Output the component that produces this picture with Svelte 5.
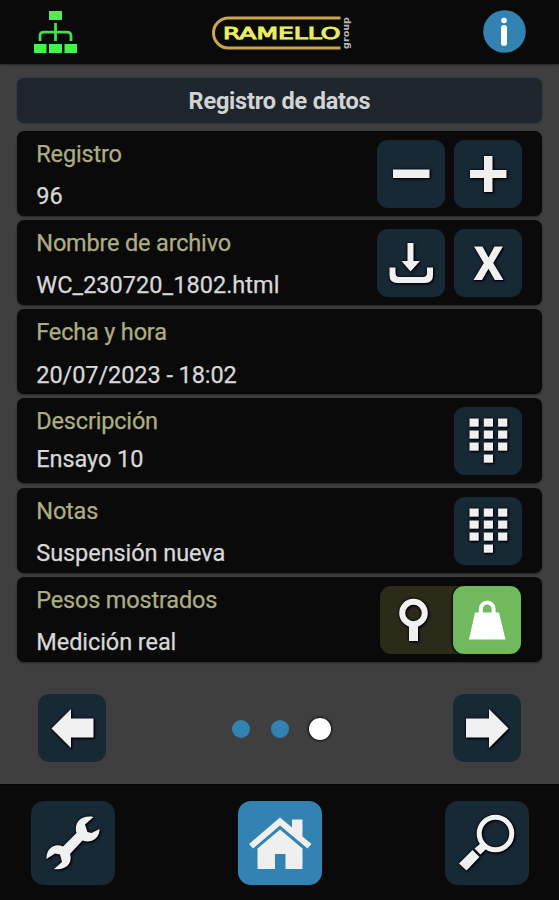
<script>
  const rows = [
    { label: 'Registro', value: '96', icons: ['minus', 'plus'] },
    { label: 'Nombre de archivo', value: 'WC_230720_1802.html', icons: ['download', 'x'], wide: true },
    { label: 'Fecha y hora', value: '20/07/2023 - 18:02', icons: [] },
    { label: 'Descripción', value: 'Ensayo 10', icons: ['keypad'], tight: true },
    { label: 'Notas', value: 'Suspensión nueva', icons: ['keypad'] },
    { label: 'Pesos mostrados', value: 'Medición real', icons: [], toggle: true }
  ];
  const keys = [0, 1, 2, 3, 4, 5, 6, 7, 8, 10];
</script>

{#snippet icon(name)}
  <svg class="ico" width="68" height="68" viewBox="0 0 68 68">
    {#if name === 'minus'}
      <path d="M16 29.5H52.5V38H16Z" />
    {:else if name === 'plus'}
      <path d="M30 16H38.5V30H52.5V38H38.5V52H30V38H16V30H30Z" />
    {:else if name === 'download'}
      <path d="M30.5 14H36.5V32H43L33.5 42.5L24.5 32H30.5Z" />
      <path d="M12.5 38.5H18.5V44Q18.5 48 22.5 48H46Q50 48 50 44V38.5H56V46Q56 54 48 54H20.5Q12.5 54 12.5 46Z" />
    {:else if name === 'x'}
      <path d="M20 17.5H28.5L34.5 28.5L40.5 17.5H49L39.2 34L49.5 51H40.8L34.5 39.8L28 51H19.5L29.8 34Z" />
    {:else if name === 'keypad'}
      {#each keys as k}
        <rect x={15.5 + (k % 3) * 14.3} y={11.5 + Math.floor(k / 3) * 12} width="9.2" height="8.2" />
      {/each}
    {:else if name === 'left'}
      <path d="M13.5 34.5L33 15V24.5H55.5V43.5H33V54Z" />
    {:else if name === 'right'}
      <path d="M55.5 34.5L36 15V24.5H13V43.5H36V54Z" />
    {/if}
  </svg>
{/snippet}

<div class="screen">
  <header>
    <svg class="tree" width="44" height="44" viewBox="0 0 44 44">
      <path fill="#4cf04c" d="M15 1H28V10H15ZM0 34H12.5V43H0ZM15 34H28V43H15ZM30.5 34H43V43H30.5Z" />
      <path fill="none" stroke="#48db4c" stroke-width="2.8" d="M21.5 13V31M6 31V26Q6 22.2 10 22.2H33Q37 22.2 37 26V31" />
    </svg>
    <svg class="logo" width="140" height="36" viewBox="0 0 140 36">
      <path fill="none" stroke="#cba64b" stroke-width="3" d="M128.500 2H16.500A15 15 0 0 0 16.500 32H128.500" />
      <text x="11" y="22.500" font-size="15" fill="#eaed61" stroke="#eaed61" stroke-width=".9" textLength="117.500" lengthAdjust="spacingAndGlyphs">RAMELLO</text>
      <text transform="translate(136.500 33) rotate(-90)" font-size="8" fill="#b8b8b8" font-weight="700" textLength="32" lengthAdjust="spacingAndGlyphs">group</text>
    </svg>
    <svg class="info" width="43" height="43" viewBox="0 0 43 43">
      <circle cx="21.5" cy="21.5" r="21.3" fill="#3282b2" />
      <circle cx="21" cy="10.5" r="2.8" fill="#fff" />
      <rect x="18" y="15" width="6" height="21" rx="3" fill="#fff" />
    </svg>
  </header>

  <main>
    <h1>Registro de datos</h1>
    <div class="list">
      {#each rows as r}
        <section class="card">
          <div class="text" class:tight={r.tight}>
            <span class="label">{r.label}</span>
            <span class="value" class:wide={r.wide}>{r.value}</span>
          </div>
          <div class="actions">
            {#each r.icons as i}
              <button aria-label={i}>{@render icon(i)}</button>
            {/each}
            {#if r.toggle}
              <div class="toggle">
                <svg class="ico" width="73" height="68" viewBox="0 0 73 68">
                  <circle cx="33.5" cy="27" r="11.3" fill="none" stroke="#f2f2f2" stroke-width="6" />
                  <path d="M29 39H38V55H29Z" />
                </svg>
                <div class="on">
                  <svg width="68" height="68" viewBox="0 0 68 68">
                    <path fill="#fff" d="M22 26.5H46L52.5 53.5H16Z" />
                    <path fill="none" stroke="#fff" stroke-width="4" d="M27.8 28V23A6.4 6.5 0 0 1 40.6 23V28" />
                  </svg>
                </div>
              </div>
            {/if}
          </div>
        </section>
      {/each}
    </div>
    <nav class="pager">
      <button aria-label="left">{@render icon('left')}</button>
      <div class="dots"><i></i><i></i><i class="current"></i></div>
      <button aria-label="right">{@render icon('right')}</button>
    </nav>
  </main>

  <footer>
    <button aria-label="tools">
      <svg class="ico" width="84" height="84" viewBox="0 0 84 84">
        <path d="M32 45.5L45.5 32C42.5 22 50 13.5 62.5 16L54 23.5L56.5 31L60.5 32L68.5 28C69 37 60 43 51.5 39.5L39 53C42 62 35 70 23 68L31 61L29 53.5L24 52.5L15.5 58C15 47 24 41.5 32 45.5Z" />
      </svg>
    </button>
    <button class="home" aria-label="home">
      <svg width="84" height="84" viewBox="0 0 84 84">
        <path fill="#efefef" d="M11 43L42 16.5L54 26.5V18.5H64.5V35.5L73.5 43L69.5 47.5L42 24.5L15 47.5Z" />
        <path fill="#efefef" d="M19.5 47.5L42 28.5L64.5 47.5V68H47.5V53H37V68H19.5Z" />
      </svg>
    </button>
    <button aria-label="search">
      <svg class="ico" width="84" height="84" viewBox="0 0 84 84">
        <circle cx="50.5" cy="32.5" r="16.3" fill="none" stroke="#f2f2f2" stroke-width="5" />
        <path d="M35.5 42.5L41 48L35.5 53.5L29.5 47.5ZM27.5 49L34.5 56L21.5 69.5L14 62.5Z" />
      </svg>
    </button>
  </footer>
</div>

<style>
  :global(body) { margin: 0; background: #3f3f3f; }
  .screen {
    width: 559px; height: 900px; overflow: hidden;
    display: flex; flex-direction: column;
    background: #3f3f3f; font-family: Roboto, sans-serif; box-sizing: border-box;
  }
  svg { display: block; flex: none; }
  header {
    height: 64px; box-sizing: border-box; background: #0a0a0a;
    display: flex; justify-content: space-between; align-items: flex-start;
    padding: 10px 33px 0 34px;
    box-shadow: 0 1px 2px #222;
  }
  .logo { margin: 6px 0 0 2px; font-family: "DejaVu Sans", sans-serif; }
  main { height: 720px; box-sizing: border-box; padding: 13.5px 17px 0; display: flex; flex-direction: column; }
  h1 {
    margin: 0 0 8px; height: 45px; line-height: 46px; border-radius: 7px;
    background: #1d262c; color: #d2d3d4; text-align: center;
    font-size: 23.5px; font-weight: 700; letter-spacing: -.2px; box-shadow: 0 0 2px #242a2e;
  }
  .list { display: flex; flex-direction: column; gap: 4.3px; }
  .card {
    height: 85px; width: 524.5px; border-radius: 7px; background: #0a0a0a;
    display: flex; justify-content: space-between; box-sizing: border-box;
    padding: 9px 19.5px 0 19.3px; box-shadow: 0 1px 2px #242424;
  }
  .text {
    display: flex; flex-direction: column; gap: 14.5px;
    font-size: 23.5px; line-height: 28px; white-space: nowrap;
    -webkit-text-stroke: .25px currentColor;
  }
  .text.tight { gap: 9.5px; }
  .label { color: #aeae82; letter-spacing: -.18px; }
  .value { color: #d8d8d8; letter-spacing: -.07px; }
  .value.wide { letter-spacing: .03px; }
  .actions { display: flex; gap: 9.5px; }
  button {
    width: 68px; height: 68px; padding: 0; border: 0; border-radius: 11px; background: #182936;
    display: flex; flex: none;
  }
  .ico { fill: #f0f0f0; filter: drop-shadow(0 0 1.5px #000) drop-shadow(1px 1px .5px #050510); }
  .toggle { display: flex; width: 141px; height: 68px; border-radius: 11px; background: #2c2b19; margin-right: 1px; }
  .on { width: 68px; height: 68px; border-radius: 11px; background: #70b95d; box-shadow: 0 0 2px 1px #080808; flex: none; }
  .pager { display: flex; justify-content: space-between; align-items: center; margin-top: 32px; padding: 0 20.5px 0 21.3px; }
  .dots { display: flex; align-items: center; gap: 21px; padding: 3px 0 0 3px; }
  i { width: 18px; height: 18px; border-radius: 50%; background: #3282b2; }
  .current { width: 22px; height: 22px; background: #fff; box-shadow: 0 0 2px 1px #111; margin-left: -1px; }
  footer {
    height: 116px; box-sizing: border-box; padding: 16px 30px 0 31px; background: #0a0a0a;
    display: flex; justify-content: space-between; border-top: 1px solid #050505;
  }
  footer button { width: 84px; height: 84px; border-radius: 13px; }
  footer .home { background: #3282b2; }
</style>
